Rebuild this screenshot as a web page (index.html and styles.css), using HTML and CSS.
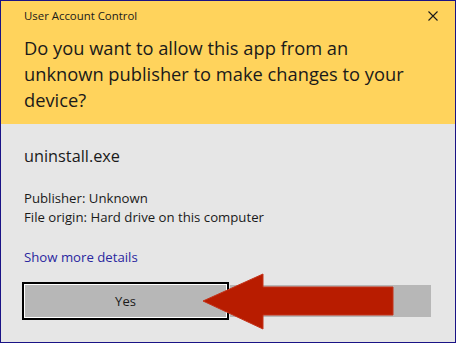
FILE: index.html
```html
<!DOCTYPE html>
<html>
<head>
<meta charset="utf-8">
<link rel="stylesheet" href="styles.css">
</head>
<body>
<div class="dialog">
  <div class="header">
    <div class="title-row">
      <span class="title">User Account Control</span>
      <svg class="close" width="10" height="10" viewBox="0 0 10 10"><path d="M0.5 0.5 L9.5 9.5 M9.5 0.5 L0.5 9.5" stroke="#1a1a1a" stroke-width="1.1" fill="none"/></svg>
    </div>
    <h1 class="question">Do you want to allow this app from an unknown publisher to make changes to your device?</h1>
  </div>
  <div class="body">
    <div class="program">uninstall.exe</div>
    <div class="details">
      <div>Publisher: Unknown</div>
      <div>File origin: Hard drive on this computer</div>
    </div>
    <a class="more" href="#">Show more details</a>
    <div class="buttons">
      <button class="btn btn-focus">Yes</button>
      <button class="btn">No</button>
    </div>
  </div>
  <svg class="arrow" width="196" height="60" viewBox="0 0 196 60"><polygon points="1,28 61,1 61,14 191,14 191,42 61,42 61,56" fill="#b81c00" stroke="#c4331a" stroke-width="1"/></svg>
</div>
</body>
</html>
```

FILE: styles.css
```css
* { box-sizing: border-box; }
html, body { margin: 0; padding: 0; }
body {
  width: 456px;
  height: 343px;
  font-family: "Open Sans", "Noto Sans", sans-serif;
  color: #1a1a1a;
}
.dialog {
  position: relative;
  width: 456px;
  height: 343px;
  border: 1px solid #1a1386;
  display: flex;
  flex-direction: column;
  background: #e6e6e6;
}
.header {
  background: #ffd35c;
  padding: 5px 0 11px 23px;
}
.title-row {
  display: flex;
  justify-content: space-between;
  align-items: center;
  padding-right: 17px;
  height: 20px;
}
.title {
  font-size: 11.4px;
  line-height: 20px;
}
.close { display: block; margin-top: 0; }
.question {
  margin: 9px 0 0 0;
  font-size: 18.3px;
  line-height: 26px;
  font-weight: normal;
  width: 405px;
}
.body {
  flex: 1;
  padding: 21px 0 0 23px;
}
.program {
  font-size: 16.3px;
  line-height: 22px;
}
.details {
  margin-top: 22px;
  font-size: 13.2px;
  line-height: 19px;
}
.more {
  display: block;
  margin-top: 21px;
  font-size: 13.2px;
  line-height: 19px;
  color: #2a27a0;
  text-decoration: none;
}
.buttons {
  margin: 18px 0 0 1px;
  display: flex;
  gap: 4px;
}
.btn {
  width: 201px;
  height: 32px;
  border: none;
  background: #b7b7b7;
  font-family: inherit;
  font-size: 13px;
  color: #1a1a1a;
  padding: 0;
}
.btn-focus {
  box-shadow: 0 0 0 1px #ffffff, 0 0 0 3px #000000;
  position: relative;
  z-index: 1;
}
.arrow {
  position: absolute;
  left: 201px;
  top: 272px;
  z-index: 2;
}
```
